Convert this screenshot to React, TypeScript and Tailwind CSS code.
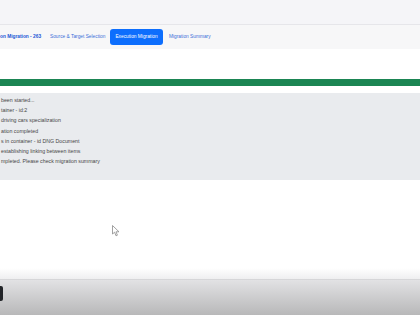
import React from "react";

const logLines = [
  "been started...",
  "tainer - id:2",
  "driving cars specialization",
  "ation completed",
  "s in container - id DNG Document",
  "establishing linking between items",
  "mpleted. Please check migration summary",
];

export default function App() {
  return (
    <div
      className="relative w-[420px] h-[315px] overflow-hidden bg-white flex flex-col"
      style={{ fontFamily: '"Liberation Sans", Arial, sans-serif' }}
    >
      <div className="h-[25px] bg-[#f5f5f8] border-b border-[#e6e6ea]" />
      <div className="h-[24px] bg-[#f7f7f8] flex items-center text-[4.8px] text-[#3b6fd8]">
        <span className="font-bold text-[#1a56d6] w-[50px] shrink-0">on Migration - 263</span>
        <span className="w-[60px] shrink-0">Source &amp; Target Selection</span>
        <span className="w-[53px] h-[16px] shrink-0 rounded-[3px] bg-[#0d6efd] text-white flex items-center justify-center">
          Execution Migration
        </span>
        <span className="ml-[6px]">Migration Summary</span>
      </div>
      <div className="h-[30px] bg-white" />
      <div className="h-[7px] bg-[#1b8553]" />
      <div className="h-[7px] bg-white" />
      <div className="h-[87px] bg-[#e9ebee] pt-[2px] text-[5.25px] leading-[10.2px] text-[#474747]">
        {logLines.map((l, i) => (
          <div key={i} className="pl-[1px] whitespace-nowrap">{l}</div>
        ))}
      </div>
      <div className="flex-1 bg-white" />
      <div className="h-[11px] bg-gradient-to-b from-white to-[#efeff0]" />
      <div className="h-[1px] bg-[#d6d6d8]" />
      <div className="h-[35px] bg-gradient-to-b from-[#e2e2e4] to-[#b8b8b9] relative">
        <div className="absolute left-[-6px] top-[6px] w-[9px] h-[15px] rounded-[2px] bg-[#222428]" />
      </div>
      <svg
        className="absolute left-[112px] top-[225px]"
        width="8"
        height="12"
        viewBox="0 0 8 12"
      >
        <path
          d="M0.5 0.5 L0.5 9 L2.6 7.2 L4 10.8 L5.4 10.2 L4 6.8 L7 6.8 Z"
          fill="white"
          stroke="#8a8a8a"
          strokeWidth="0.8"
          strokeLinejoin="round"
        />
      </svg>
    </div>
  );
}
